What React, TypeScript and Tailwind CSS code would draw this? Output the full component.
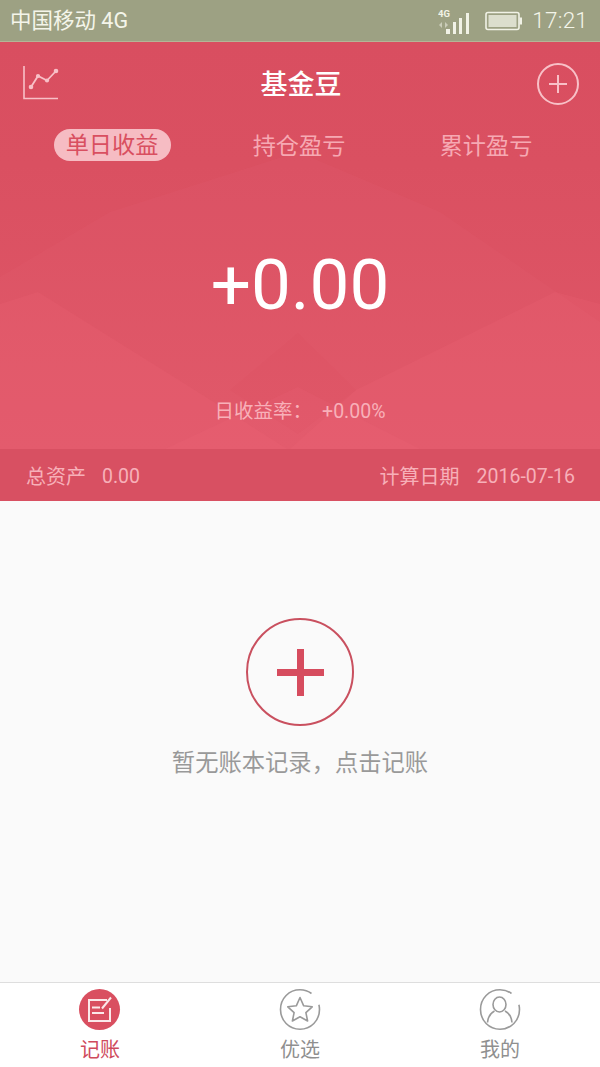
function TrendIcon() {
  return (
    <svg width="36" height="34" viewBox="0 0 36 34" fill="none" stroke="#f8c0c7">
      <path d="M1 0V32.5H35" strokeWidth="1.6" />
      <path d="M8 21L15 10L24 14.5L33 5" strokeWidth="1.8" />
      <circle cx="8" cy="21" r="2.3" fill="#f8c0c7" stroke="none" />
      <circle cx="15" cy="10" r="2.1" fill="#f8c0c7" stroke="none" />
      <circle cx="24" cy="14.5" r="2.1" fill="#f8c0c7" stroke="none" />
      <circle cx="33" cy="5" r="2.3" fill="#f8c0c7" stroke="none" />
    </svg>
  );
}

function Background() {
  return (
    <svg className="absolute inset-0 h-full w-full" viewBox="0 0 600 407" preserveAspectRatio="none">
      <defs>
        <linearGradient id="bg" x1="0" y1="0" x2="0" y2="1">
          <stop offset="0" stopColor="#d94e60" />
          <stop offset="0.3" stopColor="#da5061" />
          <stop offset="1" stopColor="#e05768" />
        </linearGradient>
      </defs>
      <rect width="600" height="407" fill="url(#bg)" />
      <polygon points="0,235 110,170 298,110 440,170 600,280 600,407 0,407" fill="#f0687c" opacity="0.1" />
      <polygon points="0,262 38,250 190,345 287,407 0,407" fill="#f0687c" opacity="0.16" />
      <polygon points="600,262 555,250 356,348 290,407 600,407" fill="#f0687c" opacity="0.16" />
      <polygon points="165,407 298,345 420,407" fill="#f0687c" opacity="0.14" />
      <polygon points="230,348 298,291 356,348 298,392" fill="#d14a5c" opacity="0.07" />
    </svg>
  );
}

function Battery() {
  return (
    <svg width="38" height="20" viewBox="0 0 38 20" fill="none">
      <rect x="1" y="1.5" width="33" height="17" rx="2" stroke="#f1f2e6" strokeWidth="1.6" />
      <rect x="3.5" y="4" width="28" height="12" fill="#dcdecd" />
      <rect x="34.5" y="6.5" width="2.5" height="7" fill="#f1f2e6" />
    </svg>
  );
}

function Signal() {
  return (
    <svg width="33" height="26" viewBox="0 0 33 26" fill="#f1f2e6">
      <rect x="8" y="21" width="4" height="5" />
      <rect x="15" y="14" width="3" height="12" />
      <rect x="21" y="10" width="3" height="16" />
      <rect x="28" y="5" width="3" height="21" />
      <path d="M4 14L1 17L4 20Z" opacity="0.55" />
      <path d="M7 14L10 17L7 20Z" opacity="0.55" />
      <text x="0" y="9" fontSize="9.5" fontWeight="700" fontFamily="Roboto, sans-serif">4G</text>
    </svg>
  );
}

function TabIcon({ name }: { name: string }) {
  if (name === "记账") {
    return (
      <svg width="42" height="41" viewBox="0 0 42 41" fill="none">
        <ellipse cx="20.5" cy="20.5" rx="20.5" ry="20.5" fill="#d94f60" />
        <path d="M28 11H10V32H31V19" stroke="#fbe9ea" strokeWidth="2" />
        <path d="M23 19.5L32 8.5" stroke="#fbe9ea" strokeWidth="2" />
        <path d="M13 18.5H21M13 24H25" stroke="#fbe9ea" strokeWidth="2" />
      </svg>
    );
  }
  if (name === "优选") {
    return (
      <svg width="42" height="41" viewBox="0 0 42 41" fill="none" stroke="#9a9a9a" strokeWidth="1.6">
        <path d="M32.5 4.5C29.2 2 25.5 0.8 21 0.8C10 0.8 1.5 9.5 1.5 20.5C1.5 31.5 10 40.2 21 40.2C32 40.2 40.5 31.5 40.5 20.5C40.5 18.8 40.3 17.2 39.9 15.7" />
        <path d="M21 8.5L24.7 16.8L33.2 17.8L26.9 23.6L28.6 32L21 27.8L13.4 32L15.1 23.6L8.8 17.8L17.3 16.8Z" strokeLinejoin="round" />
      </svg>
    );
  }
  return (
    <svg width="42" height="41" viewBox="0 0 42 41" fill="none" stroke="#9a9a9a" strokeWidth="1.6">
      <path d="M32.5 4.5C29.2 2 25.5 0.8 21 0.8C10 0.8 1.5 9.5 1.5 20.5C1.5 31.5 10 40.2 21 40.2C32 40.2 40.5 31.5 40.5 20.5C40.5 18.8 40.3 17.2 39.9 15.7" />
      <ellipse cx="20.5" cy="15.5" rx="6.5" ry="7.5" />
      <path d="M15.5 22C11.5 24 9 28 8.5 33.5M26 22C30 24 32.5 28 33 33.5" />
    </svg>
  );
}

export default function App() {
  return (
    <div className="flex h-[1067px] w-[600px] flex-col overflow-hidden bg-[#fafafa] font-['Roboto','Noto_Sans_CJK_SC',sans-serif]">
      <div className="flex h-[42px] shrink-0 items-center justify-between border-b border-[#b4b596] bg-[#9da183] pl-[10px] pr-[12px] text-[#f4f5ea]">
        <span className="text-[21.5px] leading-none">中国移动 4G</span>
        <div className="flex items-center">
          <Signal />
          <span className="ml-[14px]"><Battery /></span>
          <span className="ml-[9px] text-[22.5px] leading-none font-light tracking-[0.2px]">17:21</span>
        </div>
      </div>

      <div className="relative flex h-[407px] shrink-0 flex-col">
        <Background />
        <div className="relative grid h-[87px] shrink-0 grid-cols-[1fr_auto_1fr] items-center pl-[23px] pr-[21px]">
          <div className="mb-[5px]"><TrendIcon /></div>
          <span className="text-[27px] font-medium leading-none text-white">基金豆</span>
          <div className="mb-[4px] flex h-[42px] w-[42px] items-center justify-center justify-self-end rounded-full border-2 border-[#f8c0c7]">
            <svg width="18" height="18" viewBox="0 0 18 18" stroke="#f8c0c7" strokeWidth="2"><path d="M9 0V18M0 9H18" /></svg>
          </div>
        </div>
        <div className="relative mt-[1px] grid h-[34px] grid-cols-[187px_187px_187px] pl-[18.5px] text-[23.2px] leading-none text-[#f6a9b3]">
          <div className="flex items-start justify-center">
            <span className="-mt-[1px] flex h-[32px] w-[117px] items-center justify-center rounded-full bg-[#f6bcc3] pt-[1px] text-[#d94f60]">单日收益</span>
          </div>
          <div className="flex items-center justify-center">持仓盈亏</div>
          <div className="flex items-center justify-center">累计盈亏</div>
        </div>
        <div className="relative mt-[79px] text-center text-[71px] leading-[84px] text-white">+0.00</div>
        <div className="relative mt-[73px] flex items-center justify-center leading-[24px] text-[#f8b0b9]">
          <span className="mr-[10px] text-[19.5px]">日收益率：</span>
          <span className="text-[19.5px]">+0.00%</span>
        </div>
      </div>

      <div className="flex h-[52px] shrink-0 items-center justify-between bg-[#d85062] pl-[26px] pr-[25px] pt-[4px] text-[20px] leading-none text-[#f7b0b9]">
        <div className="flex items-center gap-[16px]"><span>总资产</span><span className="text-[19.5px]">0.00</span></div>
        <div className="flex items-center gap-[17px]"><span>计算日期</span><span className="text-[19.5px]">2016-07-16</span></div>
      </div>

      <div className="flex flex-1 flex-col items-center pt-[117px]">
        <div className="flex h-[108px] w-[108px] items-center justify-center rounded-full border-2 border-[#c9505f]">
          <svg width="47" height="47" viewBox="0 0 47 47" fill="#d64c5e"><path d="M20 0H27V20H47V27H27V47H20V27H0V20H20Z" /></svg>
        </div>
        <p className="mt-[21px] text-[23.3px] leading-[32px] text-[#999999]">暂无账本记录，点击记账</p>
      </div>

      <div className="grid h-[85px] shrink-0 grid-cols-3 border-t border-[#dedede] bg-white">
        {["记账", "优选", "我的"].map((t) => (
          <div key={t} className="flex flex-col items-center pt-[6px]">
            <TabIcon name={t} />
            <span className={`mt-[6px] text-[20px] leading-[28px] ${t === "记账" ? "text-[#cf4a5c]" : "text-[#8f8f8f]"}`}>{t}</span>
          </div>
        ))}
      </div>
    </div>
  );
}
